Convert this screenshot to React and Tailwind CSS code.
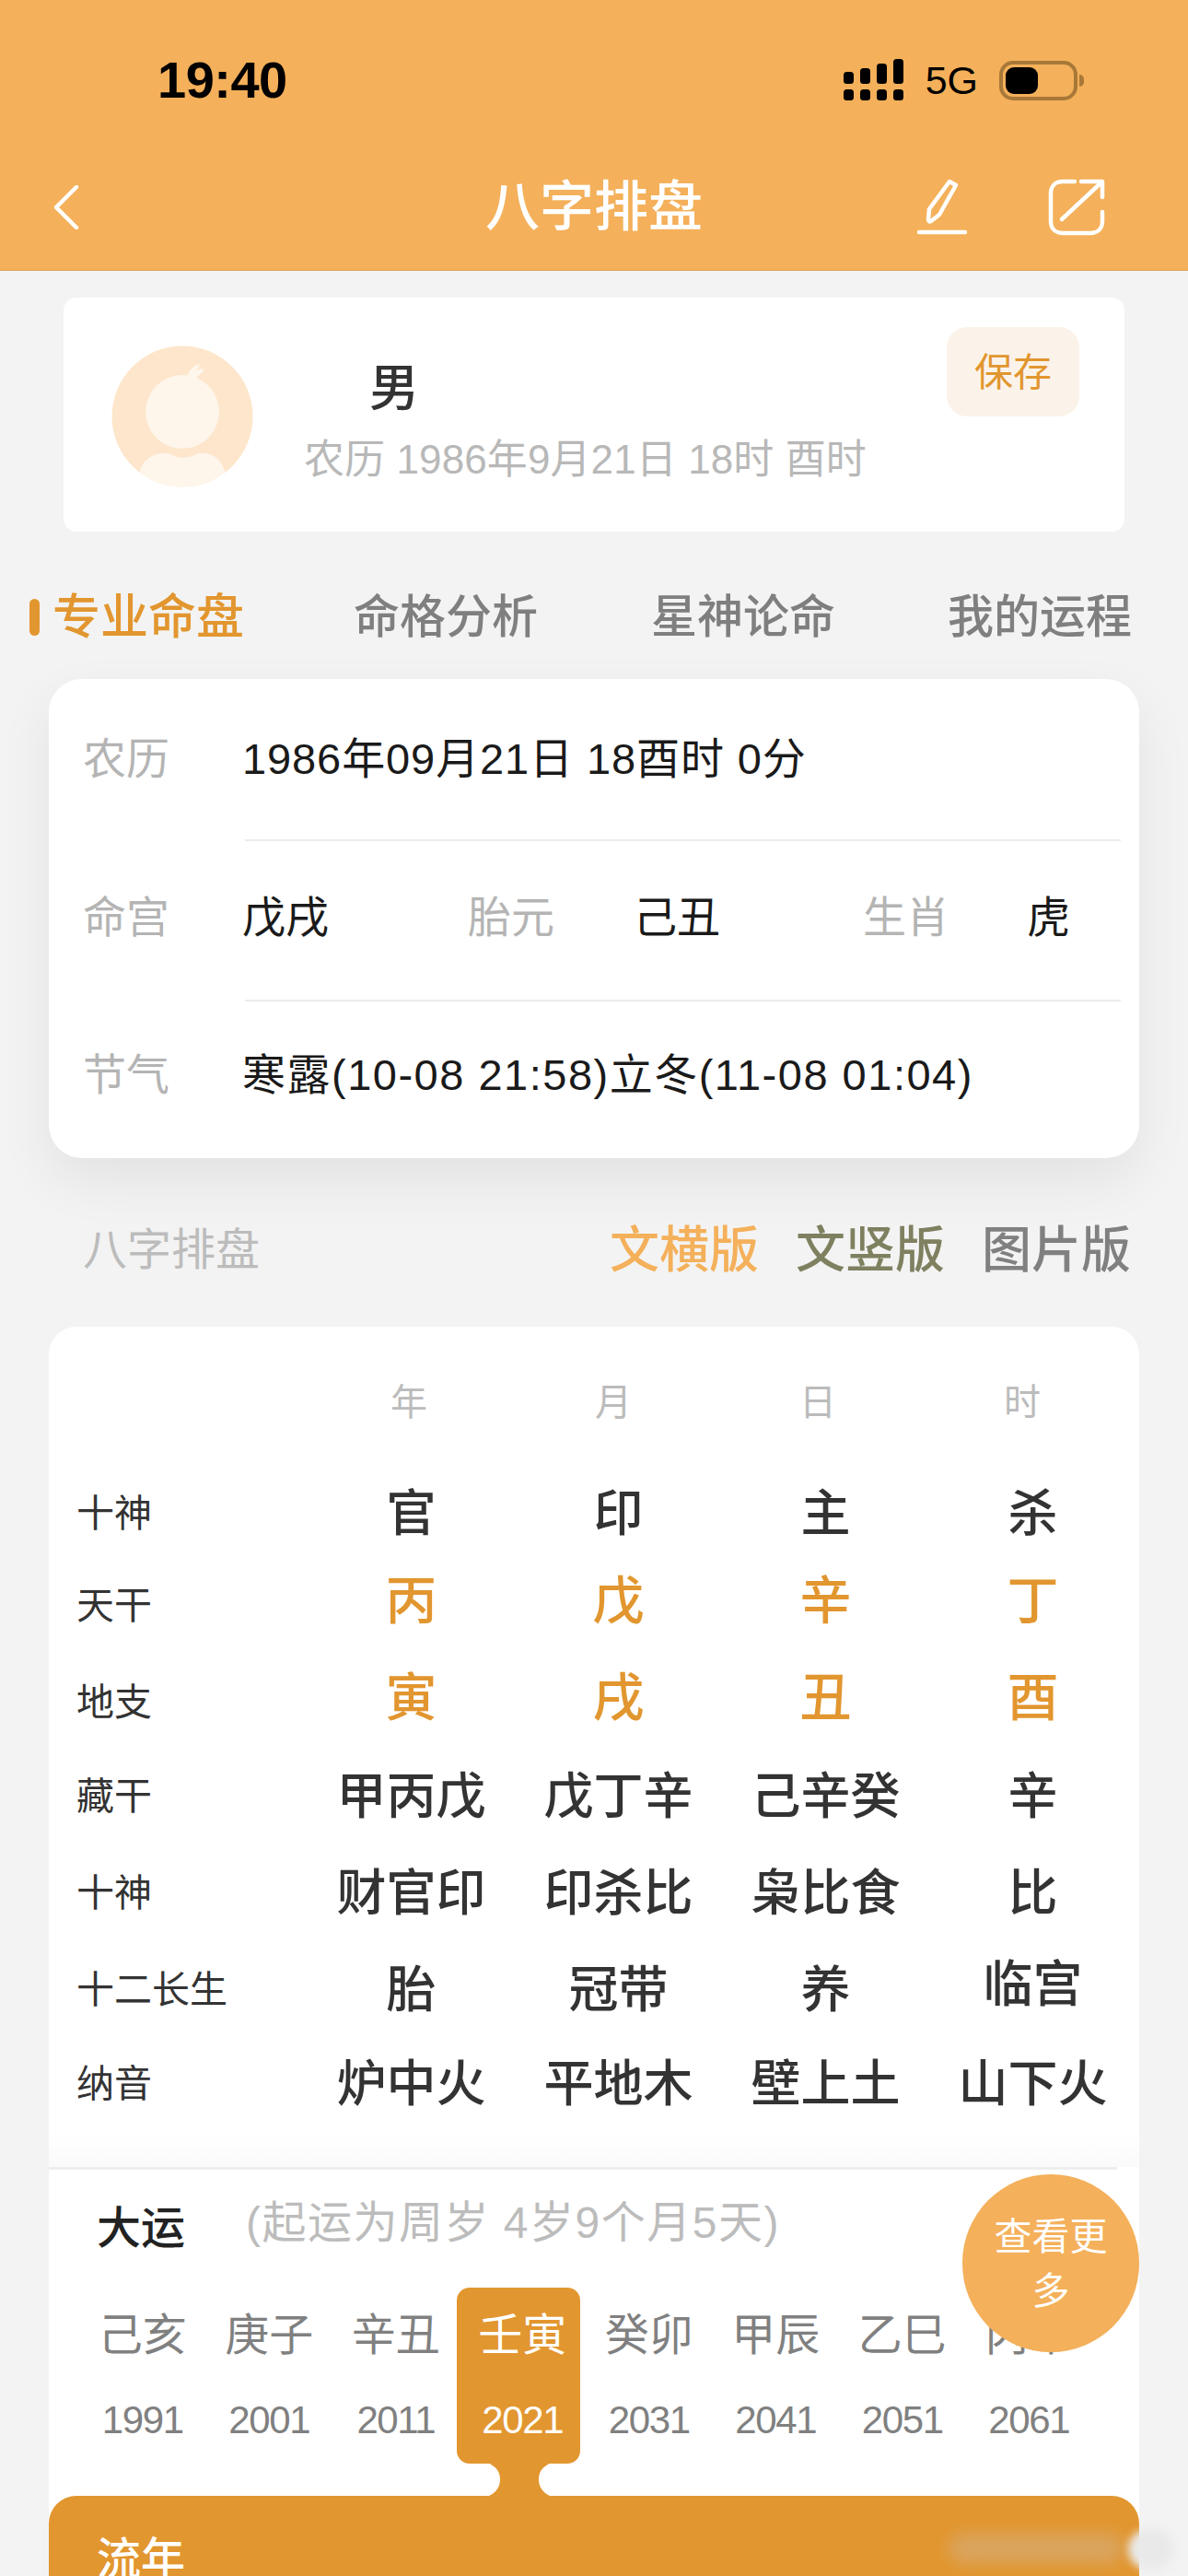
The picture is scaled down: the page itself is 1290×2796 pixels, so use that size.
const TABS = ['命格分析', '星神论命', '我的运程']

const CHART_ROWS = [
  { label: '十神', cells: ['官', '印', '主', '杀'], row: 'h-[100px]' },
  { label: '天干', cells: ['丙', '戊', '辛', '丁'], row: 'h-[100px]', accent: true },
  { label: '地支', cells: ['寅', '戌', '丑', '酉'], row: 'h-[110px]', accent: true },
  { label: '藏干', cells: ['甲丙戊', '戊丁辛', '己辛癸', '辛'], row: 'h-[94px]' },
  { label: '十神', cells: ['财官印', '印杀比', '枭比食', '比'], row: 'h-[116px]' },
  { label: '十二长生', cells: ['胎', '冠带', '养', '临宫'], row: 'h-[94px]' },
  { label: '纳音', cells: ['炉中火', '平地木', '壁上土', '山下火'], row: 'h-[110px]' },
]

const DAYUN = [
  { gz: '己亥', year: '1991' },
  { gz: '庚子', year: '2001' },
  { gz: '辛丑', year: '2011' },
  { gz: '壬寅', year: '2021', active: true },
  { gz: '癸卯', year: '2031' },
  { gz: '甲辰', year: '2041' },
  { gz: '乙巳', year: '2051' },
  { gz: '丙午', year: '2061' },
]

function Signal() {
  return (
    <svg width="66" height="46" viewBox="0 0 66 46" fill="#000">
      <rect x="0" y="14" width="11" height="13" rx="3.5" />
      <rect x="18" y="10" width="11" height="17" rx="3.5" />
      <rect x="36" y="5" width="11" height="22" rx="3.5" />
      <rect x="54" y="0" width="11" height="27" rx="3.5" />
      <rect x="0" y="33" width="11" height="12" rx="3.5" />
      <rect x="18" y="33" width="11" height="12" rx="3.5" />
      <rect x="36" y="33" width="11" height="12" rx="3.5" />
      <rect x="54" y="33" width="11" height="12" rx="3.5" />
    </svg>
  )
}

function Battery() {
  return (
    <div className="flex items-center gap-[2px]">
      <div className="w-[85px] h-[43px] rounded-[15px] border-[4px] border-[#a87838] p-[3px]">
        <div className="w-[35px] h-full rounded-[9px] bg-black" />
      </div>
      <div className="w-[5px] h-[13px] rounded-r-full bg-[#a87838]" />
    </div>
  )
}

function Avatar() {
  return (
    <svg width="154" height="154" viewBox="0 0 154 154" className="shrink-0">
      <defs>
        <clipPath id="avatarClip"><circle cx="77" cy="77" r="76.5" /></clipPath>
      </defs>
      <circle cx="77" cy="77" r="76.5" fill="#fde6cb" />
      <g clipPath="url(#avatarClip)" fill="#fef5eb">
        <circle cx="77" cy="72" r="40" />
        <path d="M82 34 C84 26 90 21 97 20 C94 24 93 26 92 27 C95 26 98 25 101 26 C97 31 93 35 88 38 Z" />
        <path d="M30 140 C34 120 50 116 62 117 C72 123 84 123 94 117 C106 116 120 120 124 140 L124 160 L30 160 Z" />
      </g>
    </svg>
  )
}

export default function App() {
  return (
    <div className="relative w-[1290px] h-[2796px] overflow-hidden bg-[#f3f3f3] font-['Liberation_Sans','Noto_Sans_CJK_SC',sans-serif]">

      {/* Header */}
      <header className="h-[294px] bg-[#f4b05a] border-b border-[#dfa45c]">
        <div className="h-[174px] flex items-center pl-[171px] pr-[113px]">
          <span className="text-[56px] leading-none font-bold text-black tracking-[-0.5px]">19:40</span>
          <div className="ml-auto flex items-center">
            <Signal />
            <span className="ml-[23px] text-[43px] leading-none text-black">5G</span>
            <div className="ml-[23px]"><Battery /></div>
          </div>
        </div>
        <div className="h-[102px] flex items-center pl-[58px] pr-[90px]">
          <svg width="28" height="48" viewBox="0 0 28 48" fill="none" stroke="#fff" strokeWidth="4.5" strokeLinecap="round" strokeLinejoin="round">
            <path d="M25 2 L3 24 L25 46" />
          </svg>
          <h1 className="ml-[441px] text-[59px] leading-none font-medium text-white">八字排盘</h1>
          <div className="ml-auto flex items-center gap-[88px]">
            <svg width="56" height="62" viewBox="0 0 56 62" fill="none" stroke="#fff" strokeWidth="4.5" strokeLinecap="round" strokeLinejoin="round">
              <path d="M4 58 H54" />
              <path d="M37 3 L44 7 L26 39 L17 46 C15 47 14 46 14 44 L15 33 Z" />
            </svg>
            <svg width="62" height="62" viewBox="0 0 62 62" fill="none" stroke="#fff" strokeWidth="4.5" strokeLinecap="round" strokeLinejoin="round">
              <path d="M29 3 H16 C8 3 3 8 3 16 V46 C3 54 8 59 16 59 H46 C54 59 59 54 59 46 V36" />
              <path d="M15 44 L58 4" />
              <path d="M36 3 H59 V20" />
            </svg>
          </div>
        </div>
      </header>

      {/* Profile */}
      <section className="mt-[29px] mx-[69px] h-[254px] rounded-[14px] bg-white flex pl-[52px] pr-[49px] pt-[52px]">
        <Avatar />
        <div className="ml-[55px] flex-1">
          <div className="pl-[71px] pt-[20px] text-[54px] leading-none font-medium text-[#333]">男</div>
          <div className="mt-[28px] text-[44px] leading-none text-[#b8b8b8] tracking-[0.1px]">农历 1986年9月21日 18时 酉时</div>
        </div>
        <button className="-mt-[20px] w-[144px] h-[97px] pt-[2px] rounded-[22px] bg-[#fbf3ea] text-[42px] text-[#e2962f]">保存</button>
      </section>

      {/* Tabs */}
      <nav className="relative h-[160px] flex items-center pl-[32px] pt-[26px] text-[50px] leading-none font-medium text-[#7f7f7f]">
        <span className="w-[11px] h-[40px] rounded-full bg-[#e2962f]" />
        <span className="ml-[14px] w-[327px] text-[52px] text-[#e2962f]">专业命盘</span>
        <span className="w-[323px]">{TABS[0]}</span>
        <span className="w-[322px]">{TABS[1]}</span>
        <span>{TABS[2]}</span>
      </nav>

      {/* Lunar info */}
      <section className="mx-[53px] h-[520px] rounded-[36px] bg-white pl-[37px] pr-[20px] text-[47px] leading-none text-[#1a1a1a] shadow-[0_24px_60px_rgba(0,0,0,0.07)]">
        <div className="h-[174px] flex items-center pb-[2px]">
          <span className="w-[173px] text-[#b4b4b4]">农历</span>
          <span className="tracking-[0.9px]">1986年09月21日 18酉时 0分</span>
        </div>
        <div className="ml-[176px] h-[2px] bg-[#ececec]" />
        <div className="h-[172px] grid grid-cols-[173px_245px_180px_249px_178px_1fr] items-center pb-[8px]">
          <span className="text-[#b4b4b4]">命宫</span>
          <span>戊戌</span>
          <span className="text-[#b4b4b4]">胎元</span>
          <span>己丑</span>
          <span className="text-[#b4b4b4]">生肖</span>
          <span>虎</span>
        </div>
        <div className="ml-[176px] h-[2px] bg-[#ececec]" />
        <div className="h-[170px] flex items-center pb-[12px]">
          <span className="w-[173px] text-[#b4b4b4]">节气</span>
          <span className="tracking-[1.5px]">寒露(10-08 21:58)立冬(11-08 01:04)</span>
        </div>
      </section>

      {/* Chart switcher */}
      <div className="h-[183px] mx-[53px] flex items-center pl-[37px] pr-[9px] pt-[16px] leading-none">
        <span className="text-[48px] text-[#bcbcbc]">八字排盘</span>
        <div className="ml-auto flex gap-[40px] text-[54px] font-medium">
          <span className="text-[#f4b05a]">文横版</span>
          <span className="text-[#7f8060]">文竖版</span>
          <span className="text-[#808080]">图片版</span>
        </div>
      </div>

      {/* Bazi chart + dayun */}
      <section className="mx-[53px] h-[1400px] rounded-t-[30px] bg-white">
        <div className="h-[153px] pt-[62px] grid grid-cols-[280px_222px_222px_222px_222px] text-[40px] leading-none text-[#bbb]">
          <span />
          <span className="text-center">年</span>
          <span className="text-center">月</span>
          <span className="text-center">日</span>
          <span className="text-center">时</span>
        </div>

        {CHART_ROWS.map((r, i) => (
          <div key={i} className={`${r.row} grid grid-cols-[251px_225px_225px_225px_225px] items-center pl-[30px] leading-none`}>
            <span className="text-[41px] text-[#333]">{r.label}</span>
            {r.cells.map((c, j) => (
              <span
                key={j}
                className={
                  r.accent
                    ? 'text-center text-[56px] font-medium text-[#e2962f] pb-[10px]'
                    : `text-center text-[54px] font-medium text-[#333] ${c === '临宫' ? 'pb-[12px]' : ''}`
                }
              >
                {c}
              </span>
            ))}
          </div>
        ))}

        <div className="h-[35px] bg-gradient-to-b from-white to-[#fafafa]" />
        <div className="mr-[24px] h-[3px] bg-[#eeeeee]" />

        <div className="h-[128px] flex items-center leading-none pl-[52px]">
          <span className="text-[48px] font-medium text-[#222]">大运</span>
          <span className="ml-[66px] text-[48px] text-[#bcbcbc] tracking-[1.5px] pb-[12px]">(起运为周岁 4岁9个月5天)</span>
        </div>

        {/* Dayun row */}
        <div className="relative h-[226px] flex pl-[33px] leading-none">
          {DAYUN.map(d => (
            <div key={d.year} className={`relative w-[137.5px] flex flex-col items-center pt-[28px] ${d.active ? 'text-white' : 'text-[#808080]'}`}>
              {d.active && (
                <div className="absolute left-[-2.5px] right-[6px] top-0 h-[191px] rounded-[14px] bg-[#e2962f]" />
              )}
              <span className="relative text-[48px]">{d.gz}</span>
              <span className="relative mt-[47px] text-[42px] tracking-[-1.4px]">{d.year}</span>
              {d.active && (
                <svg width="70" height="36" viewBox="0 0 70 36" fill="#e2962f" className="absolute left-[30px] top-[190px]">
                  <path d="M0 0 C10 4 14 10 14 18 C14 26 10 32 2 36 H68 C60 32 56 26 56 18 C56 10 60 4 70 0 Z" />
                </svg>
              )}
            </div>
          ))}
        </div>

        {/* Liunian */}
        <div className="h-[300px] rounded-t-[30px] bg-[#e2962f] pl-[52px] pt-[45px] text-[48px] leading-none font-medium text-white">
          流年
        </div>
      </section>

      {/* More bubble */}
      <button className="absolute left-[1045px] top-[2360px] w-[192px] h-[193px] rounded-full bg-[#f4b05a] flex items-center justify-center text-[41px] leading-[59px] text-white text-center">
        <span className="w-[126px] pt-[2px]">查看更多</span>
      </button>

      {/* Watermark smudge */}
      <div className="absolute left-[1030px] top-[2750px] w-[190px] h-[32px] rounded-full bg-[#d9a561] blur-[9px]" />
      <div className="absolute left-[1225px] top-[2745px] w-[50px] h-[44px] rounded-full bg-[#e9e9e9] blur-[5px]" />
    </div>
  )
}
